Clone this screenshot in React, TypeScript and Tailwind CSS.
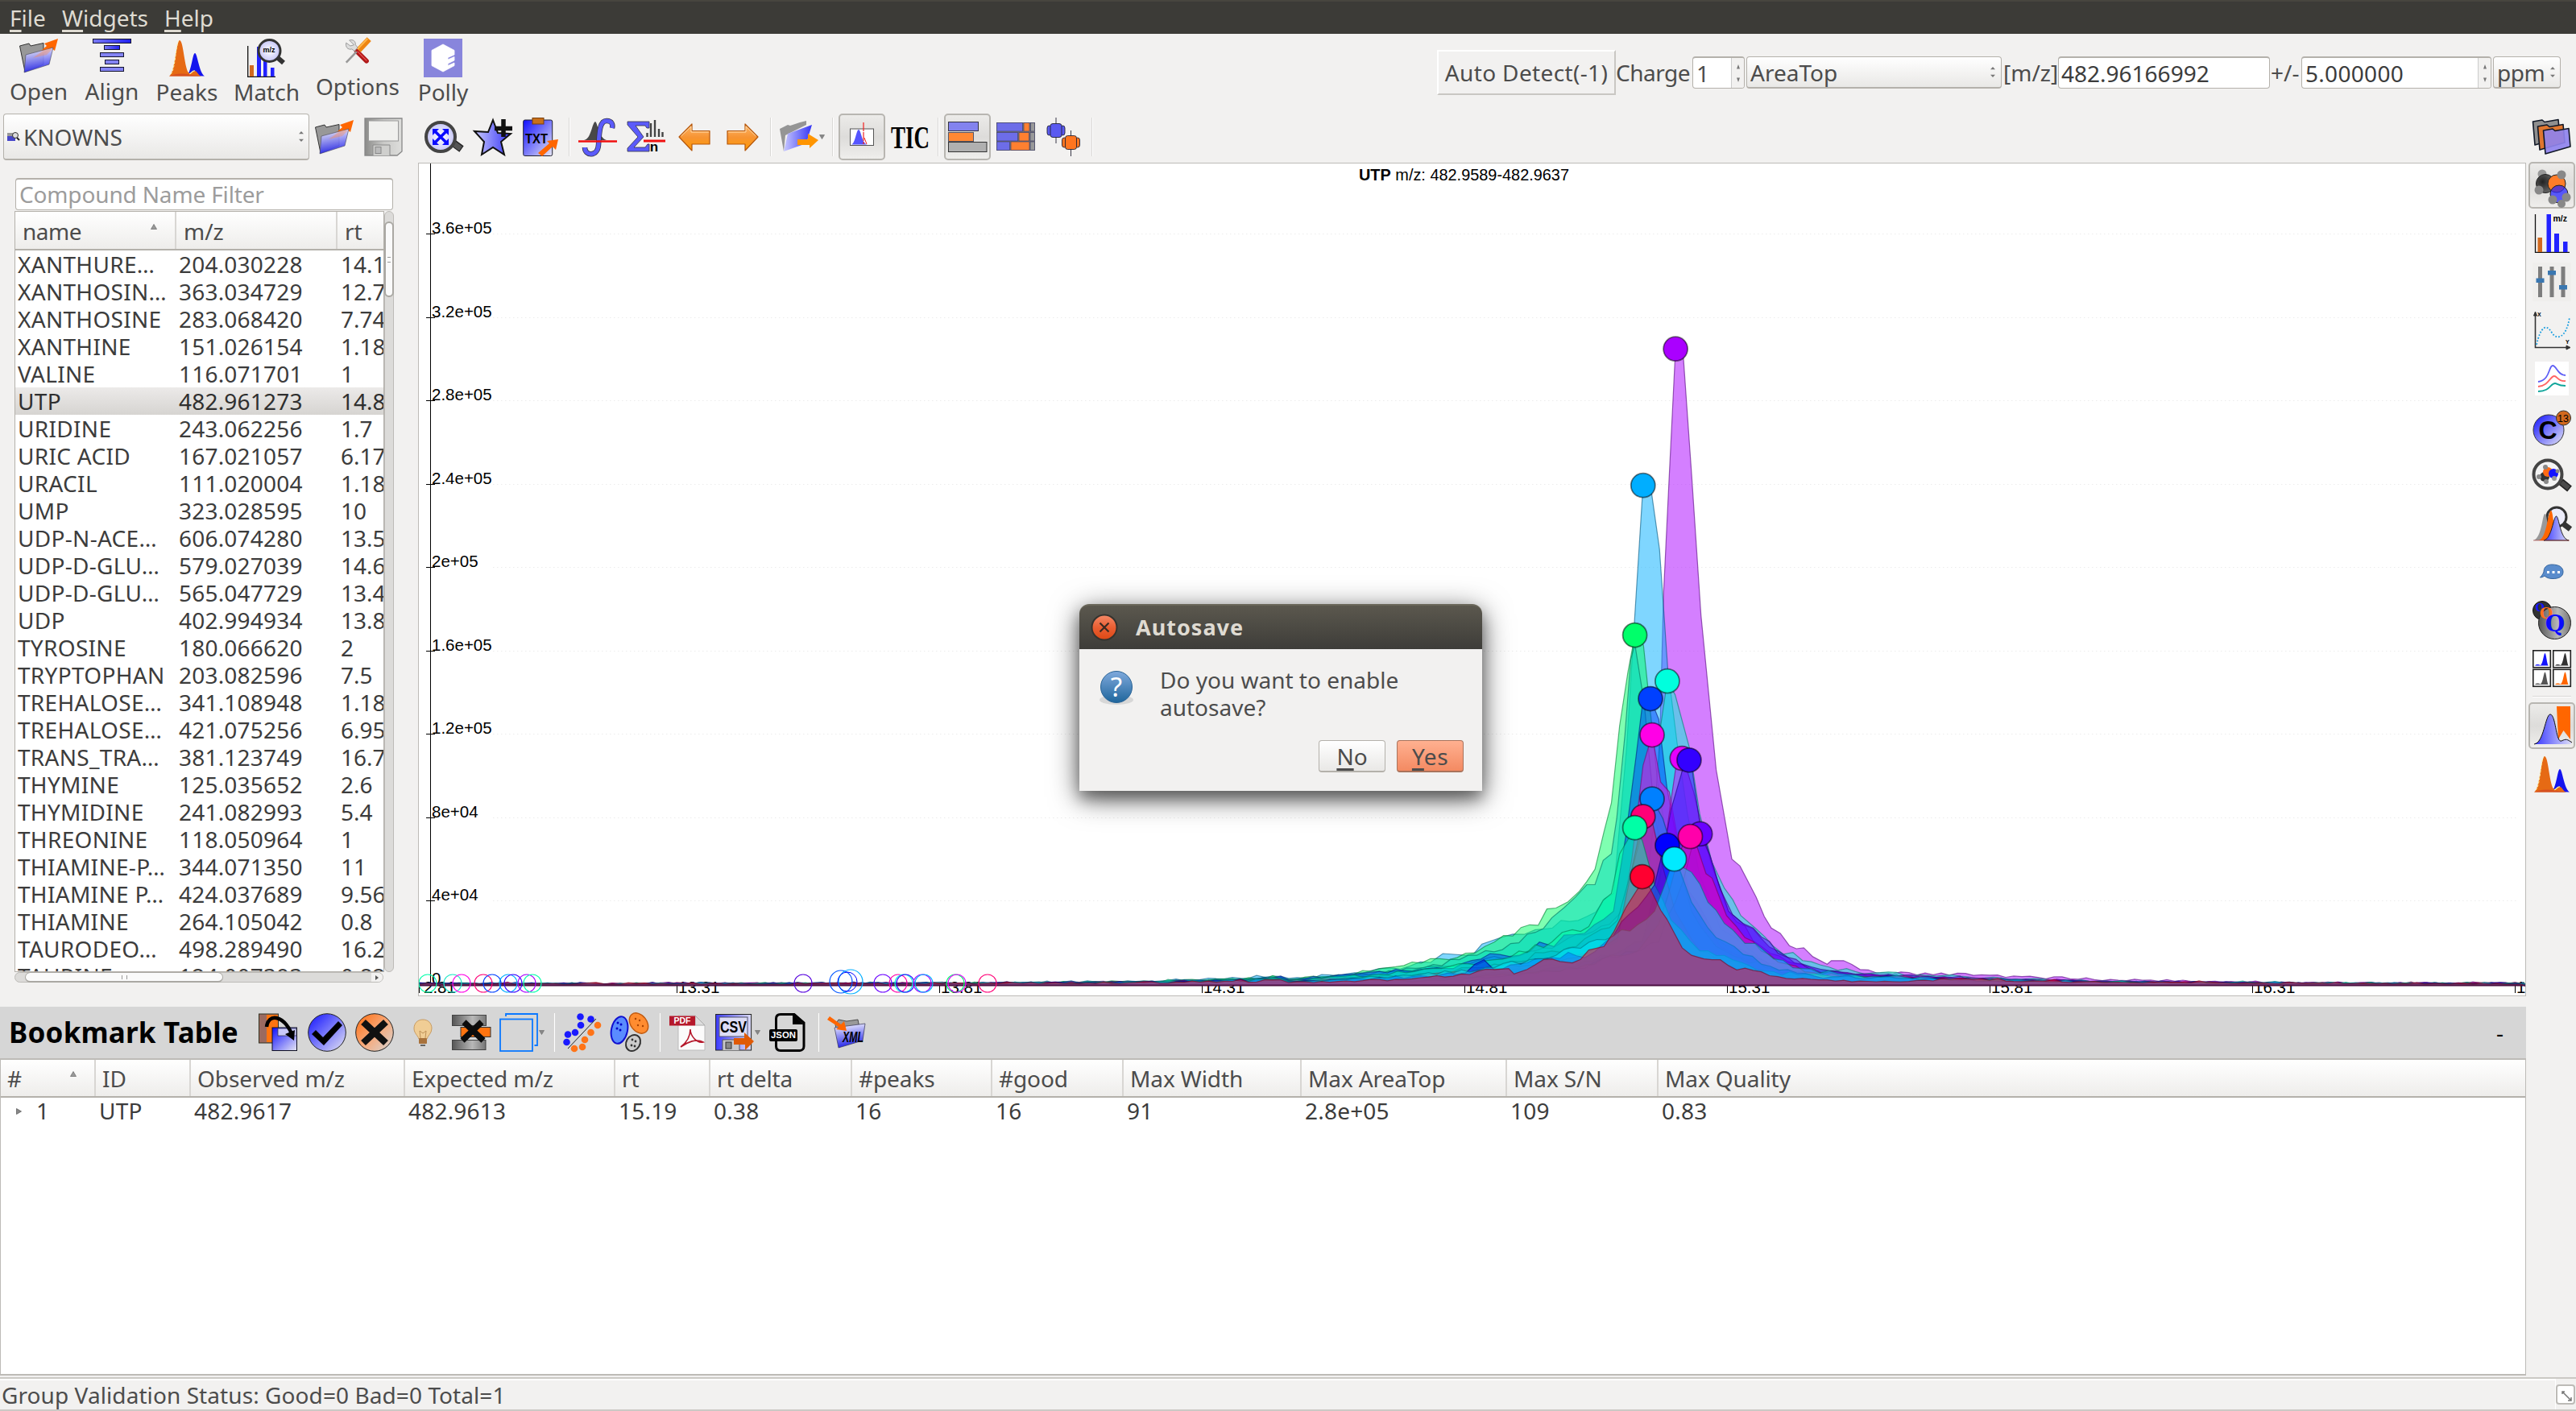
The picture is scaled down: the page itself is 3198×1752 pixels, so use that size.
import React from "react";

type P = { children?: React.ReactNode; className?: string };

/* ---------- shared gradients ---------- */
const Defs = () => (
  <svg className="absolute h-0 w-0" aria-hidden="true">
    <defs>
      <linearGradient id="blueV" x1="0.3" y1="0" x2="0.5" y2="1">
        <stop offset="0" stopColor="#f4f4ff" /><stop offset="1" stopColor="#1a1ae8" />
      </linearGradient>
      <linearGradient id="blueD" x1="0" y1="0" x2="1" y2="1">
        <stop offset="0" stopColor="#0f0fff" /><stop offset="1" stopColor="#e6e6f4" />
      </linearGradient>
      <linearGradient id="blueH" x1="0" y1="0" x2="1" y2="0">
        <stop offset="0" stopColor="#3a3aff" /><stop offset="1" stopColor="#dcdcf8" />
      </linearGradient>
      <linearGradient id="blueR" x1="0" y1="0" x2="1" y2="0">
        <stop offset="0" stopColor="#c8c8ff" /><stop offset="1" stopColor="#3535f5" />
      </linearGradient>
      <linearGradient id="bar" x1="0" y1="0" x2="1" y2="0">
        <stop offset="0" stopColor="#7a7af5" /><stop offset="1" stopColor="#2020f0" />
      </linearGradient>
      <linearGradient id="orD" x1="0" y1="0" x2="1" y2="1">
        <stop offset="0" stopColor="#ff6a0a" /><stop offset="0.5" stopColor="#f8a878" /><stop offset="1" stopColor="#d6d6d6" />
      </linearGradient>
      <linearGradient id="orV" x1="0" y1="0" x2="0" y2="1">
        <stop offset="0" stopColor="#fdb76a" /><stop offset="0.5" stopColor="#f79433" /><stop offset="1" stopColor="#ff9a00" />
      </linearGradient>
      <linearGradient id="grayH" x1="0" y1="0" x2="1" y2="0">
        <stop offset="0" stopColor="#555" /><stop offset="0.6" stopColor="#b8b8b8" /><stop offset="1" stopColor="#777" />
      </linearGradient>
      <linearGradient id="floppy" x1="0" y1="0" x2="1" y2="0">
        <stop offset="0" stopColor="#8a8a88" /><stop offset="0.5" stopColor="#c9c9c7" /><stop offset="1" stopColor="#dededc" />
      </linearGradient>
      <radialGradient id="dark" cx="0.35" cy="0.4" r="0.8">
        <stop offset="0" stopColor="#222" /><stop offset="1" stopColor="#777" />
      </radialGradient>
      <radialGradient id="lens" cx="0.5" cy="0.5" r="0.6">
        <stop offset="0" stopColor="#ffffff" /><stop offset="1" stopColor="#b9b9f5" />
      </radialGradient>
      <linearGradient id="q" x1="0" y1="0" x2="0" y2="1">
        <stop offset="0" stopColor="#7fa9dc" /><stop offset="1" stopColor="#1f669c" />
      </linearGradient>
      <linearGradient id="close" x1="0" y1="0" x2="0" y2="1">
        <stop offset="0" stopColor="#f58a68" /><stop offset="0.5" stopColor="#ea5f33" /><stop offset="1" stopColor="#dd4814" />
      </linearGradient>
    </defs>
  </svg>
);

const Ic = ({ children, className = "h-[48px] w-[48px]" }: P) => (
  <svg viewBox="0 0 48 48" className={`shrink-0 overflow-visible ${className}`}>{children}</svg>
);

/* ---------- icons ---------- */
const FolderOpen = (p: P) => (
  <Ic {...p}>
    <path d="M0.5 9 L12 6 L14 9 L30 5.5 L30 32 L7 41 Z" fill="#989898" stroke="#333" />
    <path d="M16 24 C22 20 27 15 34 9 L31 6 L48 0 L44 15 L40 12 C34 18 26 21 16 24Z" fill="#ff6600" />
    <path d="M8 20 L42 11 L37 32 L6 42 Z" fill="url(#blueV)" fillOpacity="0.92" stroke="#445" strokeWidth="0.6" />
    <path d="M17 24 L34 12 L41 13 L34 20Z" fill="#ff8844" opacity="0.35" />
  </Ic>
);
const AlignIc = () => (
  <Ic>
    {[[0, 0, 48], [14, 8, 20], [9, 17, 30], [15, 26, 18], [9, 35, 30]].map(([x, y, w]) => (
      <rect key={y} x={x + 0.5} y={y + 0.5} width={w - 1} height="5" fill={y > 12 ? "#8484f4" : "url(#bar)"} stroke="#151530" />
    ))}
  </Ic>
);
const PeaksIc = (p: P) => (
  <Ic {...p}>
    <path d="M24 46 C30 40 31 18 34 18 C37 18 39 42 46 46.5Z" fill="#1414ee" />
    <path d="M2 46.5 C9 44 11 2 15 2 C20 2 21 40 27 43 C29 44 31 40 34 40 C37 40 38 46 42 46.5Z" fill="#e66a14" />
    <path d="M4 44 C10 38 10 6 14 3" fill="none" stroke="#ffef9a" strokeDasharray="3 1.5" />
    <path d="M27 44 C30 43 31 39 34 40" fill="none" stroke="#ffef9a" strokeWidth="1.3" />
    <path d="M2 46.5 C14 41 24 44 42 46.5Z" fill="#d65020" />
  </Ic>
);
const MatchIc = () => (
  <Ic>
    <path d="M0.7 9 V47.3 H35" fill="none" stroke="#111" strokeWidth="1.3" />
    <rect x="3" y="33" width="5" height="14" fill="#d2691e" />
    <rect x="12" y="10" width="5" height="37" fill="#2222ff" />
    <rect x="20" y="27" width="4.5" height="20" fill="#2222ff" />
    <rect x="29" y="36" width="4.5" height="11" fill="#2222ff" />
    <path d="M38 24 L45 30" stroke="#333" strokeWidth="6" />
    <circle cx="27.5" cy="15" r="13.5" fill="url(#lens)" stroke="#333" strokeWidth="3" />
    <text x="27" y="17" fontSize="9" fontWeight="bold" textAnchor="middle" fontFamily="Liberation Sans, sans-serif">m/z</text>
  </Ic>
);
const ToolsIc = () => (
  <Ic className="h-[31px] w-[32px]">
    <path d="M22 24 L41 43" stroke="#b01818" strokeWidth="9" strokeLinecap="round" />
    <path d="M24 25 L41 42" stroke="#e55" strokeWidth="2" strokeLinecap="round" />
    <path d="M2 46 L22 25" stroke="#999" strokeWidth="4" />
    <path d="M26 22 L46 1" stroke="#ee8512" strokeWidth="11" />
    <path d="M24 20 L43 0" stroke="#ffb84d" strokeWidth="3" />
    <path d="M8 3 L17 12 L10 14 L2 8 C0 16 5 22 13 20 L18 24 L24 17 L20 12 C20 5 16 1 8 3Z" fill="#ddd" stroke="#999" strokeWidth="1.5" />
  </Ic>
);
const PollyIc = () => (
  <Ic>
    <rect width="48" height="48" fill="#8885dc" />
    <path d="M24 7 L38 14.5 V20 L30 23.5 V26 L38 22.5 V27 L30 31 V33.5 L38 30 V33.5 L24 41 L10 33.5 V14.5Z" fill="#fff" stroke="#fff" strokeWidth="0.8" strokeLinejoin="round" />
  </Ic>
);
const FloppyIc = () => (
  <Ic>
    <path d="M1 1 H47 V42 L41 47 H1Z" fill="url(#floppy)" stroke="#888" strokeWidth="1.3" />
    <rect x="5.5" y="4" width="37" height="25" fill="#f0f0ee" stroke="#999" />
    <path d="M11 47 V34 H32 V47" fill="#cfcfcd" stroke="#8a8a8a" />
    <rect x="14" y="36.5" width="7" height="8" fill="#bbb" stroke="#888" />
  </Ic>
);
const ZoomFitIc = () => (
  <Ic>
    <path d="M35 31 L46 39" stroke="#222" strokeWidth="9" />
    <path d="M36 32 L45 38.5" stroke="#555" strokeWidth="6.5" />
    <circle cx="20" cy="24" r="18" fill="url(#lens)" stroke="#444" strokeWidth="4" />
    <path d="M13 17 L27 31 M27 17 L13 31" stroke="#0a0aff" strokeWidth="3.5" />
    <path d="M10 14 h8 l-8 8Z M30 14 h-8 l8 8Z M10 34 h8 l-8 -8Z M30 34 h-8 l8 -8Z" fill="#0a0aff" />
  </Ic>
);
const StarIc = () => (
  <Ic>
    <path d="M24 3 L30 19 L46 20 L34 30 L38 46 L24 37 L10 46 L13 30 L1 17 L18 18Z" fill="url(#blueR)" stroke="#111" strokeWidth="2" />
    <path d="M37 2 V24 M26 13.5 H48" stroke="#111" strokeWidth="5.5" />
  </Ic>
);
const TxtIc = () => (
  <Ic>
    <rect x="0.7" y="3" width="36" height="44.5" rx="2" fill="url(#blueD)" stroke="#223" />
    <rect x="12" y="0.5" width="14" height="7.5" fill="#c8701a" stroke="#7a3f0a" />
    <text x="17" y="32" textAnchor="middle" fontSize="17" fontWeight="bold" textLength="28" lengthAdjust="spacingAndGlyphs" fontFamily="Liberation Sans, sans-serif">TXT</text>
    <path d="M19 44 L33 32 L30 29 L44 27 L41 40 L37 36 L24 48Z" fill="#ff6600" />
  </Ic>
);
const IntegralIc = () => (
  <Ic>
    <path d="M8 28 C17 27 18 6 22 5 C25 6 26 25 36 28Z" fill="#484848" />
    <path d="M9 37 C9 48 25 49 26 34 C27 20 27 4 36 4 C43 4 44 9 43 13" fill="none" stroke="#334" strokeWidth="6.5" />
    <path d="M9 37 C9 48 25 49 26 34 C27 20 27 4 36 4 C43 4 44 9 43 13" fill="none" stroke="#5b5bfa" strokeWidth="5" />
    <path d="M1 29.5 H49" stroke="#f01010" strokeWidth="2.5" />
  </Ic>
);
const SigmaIc = () => (
  <Ic>
    <path d="M1 5 H28 V13 H25 L23 10 H11 L21 24 L9 37 H23 L26 33 H28 V42 H1 V38 L14 24 L1 9Z" fill="#5b5bfa" stroke="#334" strokeWidth="0.8" />
    <path d="M25.5 24 V19 M30 24 V7 M35 24 V3 M40 24 V14 M44.5 24 V18" stroke="#444" strokeWidth="2.4" />
    <path d="M21 29 H48" stroke="#f01010" strokeWidth="3" />
    <text x="34" y="42" fontSize="17" fontWeight="bold" textAnchor="middle" fontFamily="Liberation Sans, sans-serif">n</text>
  </Ic>
);
const ArrowIc = ({ flip }: { flip?: boolean }) => (
  <Ic>
    <g transform={flip ? "matrix(-1 0 0 1 48 0)" : undefined}>
      <path d="M5 24 L21 8 V16.5 H43 V33 H21 V41Z" fill="url(#orV)" stroke="#b5560a" strokeWidth="1.2" strokeLinejoin="round" />
      <path d="M7.5 23 L20 11 V18 H42" fill="none" stroke="#ffd9a8" />
    </g>
  </Ic>
);
const FolderGo = () => (
  <Ic>
    <path d="M1 14 L11 9 L14 10 L26 6 L34 4 L34 9 L8 22 L6 42Z" fill="#959595" />
    <path d="M11 20 L41 9 L34 32 L6 42Z" fill="url(#blueR)" />
    <path d="M23 27 H36 V20 L49 28 L38 38 V34 H23Z" fill="#ff9500" />
  </Ic>
);
const EicIc = () => (
  <Ic>
    <rect x="9.5" y="14" width="29" height="20.5" fill="#fff" stroke="#555" />
    <path d="M11 33.5 C16 32 17 15 20 15 C23 15 24 33 31 33.5Z" fill="#5555ff" />
    <path d="M26 6 V33" stroke="#f02020" strokeDasharray="11 1" strokeWidth="1.2" />
    <path d="M27 25 L30 33" stroke="#f02020" />
  </Ic>
);
const TicIc = () => (
  <Ic>
    <text x="0" y="38" fontSize="41" fontWeight="bold" textLength="48" lengthAdjust="spacingAndGlyphs" fontFamily="Liberation Serif, serif">TIC</text>
  </Ic>
);
const BarsIc = () => (
  <Ic>
    <rect x="0.5" y="5.5" width="37" height="11" fill="#8383ee" stroke="#334" />
    <rect x="0.5" y="18.5" width="31" height="11" fill="#ff8833" stroke="#556" />
    <rect x="0.5" y="30.5" width="47.5" height="12" fill="#b0b0b0" stroke="#333" />
  </Ic>
);
const StackIc = () => (
  <Ic>
    <rect x="0" y="6" width="48" height="35" fill="#777" />
    {[[0.5, 6.5, 32, "#6d6de8"], [34, 6.5, 7, "#ff8030"], [42.5, 6.5, 5, "#999"], [0.5, 18.5, 26, "#6d6de8"], [28, 18.5, 12.5, "#ff8030"], [42, 18.5, 5.5, "#999"], [0.5, 30, 16, "#6d6de8"], [18, 30, 23, "#ff8030"], [42, 30, 5.5, "#999"]].map(([x, y, w, c], i) => (
      <rect key={i} x={x} y={y} width={w} height="10.5" fill={c as string} stroke="#44446a" strokeWidth="0.7" />
    ))}
  </Ic>
);
const MirrorIc = () => (
  <Ic>
    {[[12, 16, 0, 32, "#5a5af0"], [30.5, 31, 16, 48, "#ff7520"]].map(([x, y, a, b, c], i) => (
      <g key={i} stroke="#223" strokeWidth="0.9">
        <path d={`M${x} ${a} V${b}`} />
        <rect x={+x - 11} y={+y - 6} width="5.5" height="12" rx="3" fill={c as string} />
        <rect x={+x + 5.5} y={+y - 6} width="5.5" height="12" rx="3" fill={c as string} />
        <rect x={+x - 7} y={+y - 8.5} width="14" height="17" rx="3" fill={c as string} />
      </g>
    ))}
  </Ic>
);

/* sidebar */
const FoldersIc = () => (
  <Ic>
    {[[0, 2, "#8f8f8f", 1], [6, 8, "#e0762f", 1], [13, 13, "#8f83ee", 0.92]].map(([x, y, c, o], i) => (
      <path key={i} transform={`translate(${x} ${y})`} d="M0.5 3 L12 1 L15 3.5 L32 0.5 L34 23 L3 32Z" fill={c as string} fillOpacity={o as number} stroke="#111827" strokeWidth="1.6" strokeLinejoin="round" />
    ))}
  </Ic>
);
const MoleculeIc = () => (
  <Ic>
    <circle cx="12" cy="10" r="5.5" fill="#999" /><circle cx="16" cy="22" r="11.5" fill="url(#dark)" stroke="#222" />
    <circle cx="30" cy="22" r="11" fill="#ff7d2a" stroke="#222" />
    <circle cx="33" cy="35" r="11" fill="#2828ff" fillOpacity="0.75" stroke="#222" />
    <circle cx="36" cy="11" r="5.5" fill="#888" /><circle cx="8" cy="30" r="5.5" fill="#888" />
    <circle cx="25" cy="42" r="5.5" fill="#888" /><circle cx="42" cy="39" r="5.5" fill="#888" /><circle cx="36" cy="47" r="5" fill="#888" />
  </Ic>
);
const MzIc = () => (
  <Ic>
    <path d="M3.5 0 V47.3 H46" fill="none" stroke="#111" strokeWidth="1.3" />
    <rect x="6.5" y="29" width="5.5" height="18" fill="#d2691e" /><rect x="17.5" y="0" width="5.5" height="47" fill="#2222ff" />
    <rect x="27" y="24" width="6" height="23" fill="#2222ff" /><rect x="38" y="34" width="5.5" height="13" fill="#2222ff" />
    <text x="25.5" y="8.5" fontSize="10.5" fontWeight="bold" fontFamily="Liberation Sans, sans-serif">m/z</text>
  </Ic>
);
const SlidersIc = () => (
  <Ic>
    <rect width="48" height="48" fill="#efeeec" />
    {[[9.5, 22.5], [24, 13], [38, 31]].map(([x, y]) => (
      <g key={x}><rect x={x - 2.5} y="5" width="5" height="38" fill="#7d7d7d" /><rect x={x - 5} y={y - 3} width="10" height="5.5" fill="#3a77b0" /></g>
    ))}
  </Ic>
);
const XyIc = () => (
  <Ic>
    <path d="M3.5 3 V45.5 H44" fill="none" stroke="#333" strokeWidth="1.6" />
    <path d="M1.5 6 L3.5 1 L5.5 6Z M42 43 L47 45.5 L42 48Z" fill="#333" stroke="#333" />
    <path d="M5 42 C10 20 17 15 24 27 C30 37 42 34 46 8" fill="none" stroke="#1a9ee0" strokeWidth="1.8" strokeDasharray="1.8 2" />
    <text x="6" y="7" fontSize="7" fontWeight="bold" fontFamily="Liberation Sans, sans-serif">X</text>
    <text x="41" y="41" fontSize="7" fontWeight="bold" fontFamily="Liberation Sans, sans-serif">Y</text>
  </Ic>
);
const CurvesIc = () => (
  <Ic>
    <rect x="3" y="3" width="42" height="42" fill="#fff" />
    <g fill="none" strokeWidth="1.8">
      <path d="M7 28 C22 26 20 8 25 8 C30 8 31 20 41 20" stroke="#5f5ff5" />
      <path d="M7 34 C20 33 22 21 27 21 C31 21 31 28 41 27" stroke="#ff6464" />
      <path d="M7 40 C22 40 22 30 28 30 C31 30 31 33 41 33" stroke="#10a59a" />
    </g>
  </Ic>
);
const C13Ic = () => (
  <Ic>
    <ellipse cx="20" cy="28" rx="19" ry="19" fill="url(#blueD)" stroke="#333" />
    <text x="19" y="39" fontSize="32" fontWeight="bold" textAnchor="middle" fontFamily="Liberation Sans, sans-serif">C</text>
    <circle cx="38.5" cy="13" r="9" fill="#d2691e" stroke="#333" />
    <text x="38" y="17.5" fontSize="12.5" textAnchor="middle" fontFamily="Liberation Sans, sans-serif">13</text>
  </Ic>
);
const MolSearchIc = () => (
  <Ic>
    <path d="M35 32 L46 41" stroke="#222" strokeWidth="9" /><path d="M36 33 L45 40" stroke="#4a4a4a" strokeWidth="6" />
    <circle cx="19" cy="23" r="17.5" fill="#f4f4f4" stroke="#444" strokeWidth="4" />
    <circle cx="15" cy="26" r="6" fill="#333" /><circle cx="19" cy="20" r="6" fill="#ff6a14" /><circle cx="26" cy="22" r="6" fill="#1414ff" />
    <circle cx="16" cy="14" r="3" fill="#888" /><circle cx="8" cy="26" r="3" fill="#888" /><circle cx="17" cy="32" r="3" fill="#888" /><circle cx="27" cy="28" r="3" fill="#999" /><circle cx="31" cy="19" r="2.5" fill="#888" />
  </Ic>
);
const PeakSearchIc = () => (
  <Ic>
    <path d="M39 25 L47 31" stroke="#333" strokeWidth="7" />
    <circle cx="30" cy="16" r="12" fill="#ececfa" stroke="#333" strokeWidth="3" />
    <path d="M1 45 C12 42 12 12 15.5 12 C19 12 19 45 24 45Z" fill="#999" />
    <path d="M8 45 C18 42 19 8 23 8 C26 8 27 45 32 45Z" fill="#ff6600" />
    <path d="M14 45 C24 43 26 15 29.5 15 C33 15 34 43 45 45Z" fill="url(#blueH)" stroke="#222" />
    <path d="M1 45 H46" stroke="#a33" strokeWidth="0.6" />
  </Ic>
);
const ChatIc = () => (
  <Ic>
    <path d="M24 15 C34 15 38 19 38 24 C38 30 33 32.5 25 32.5 C20 32.5 17 31 15 29 C13 30.5 11 31 9.5 31 C11 29.5 13 27 14 24 C14 19 17 15 24 15Z" fill="#5a8ccc" stroke="#35659e" />
    <path d="M18 24.5 h3 M24.5 24.5 h3 M31 24.5 h3" stroke="#fff" strokeWidth="3" />
  </Ic>
);
const QIc = () => (
  <Ic>
    <circle cx="12" cy="12" r="11.5" fill="#333" stroke="#111" />
    <circle cx="27.5" cy="27.5" r="20" fill="url(#grayH)" stroke="#222" />
    <g fontFamily="DejaVu Serif, serif" fontWeight="bold" textAnchor="middle">
      <text x="9.5" y="12.5" fontSize="13" fill="#1414ff">Q</text><text x="17" y="22" fontSize="19" fill="#ff7020">Q</text><text x="28" y="38" fontSize="28" fill="#0a0aff">Q</text>
    </g>
  </Ic>
);
const FourIc = () => (
  <Ic>
    {[[0, 1, "#1414ff"], [25, 1, "#333"], [0, 24.5, "#555"], [25, 24.5, "#ff6600"]].map(([x, y, c], i) => (
      <g key={i} transform={`translate(${x} ${y})`}>
        <rect x="0.8" y="0.8" width="21.5" height="21" fill="#fff" stroke="#222" strokeWidth="1.6" />
        <path d="M3 19.5 C5 17 8 18 10 19 C13 17 14 4 15.5 4 C17 4 18 19 20 19.5Z" fill={c as string} />
      </g>
    ))}
  </Ic>
);
const BookmarkPeakIc = () => (
  <Ic>
    <path d="M30 0 H47 V41 L38.5 30 L32 41Z" fill="#ff6600" />
    <path d="M3 46 C14 46 16 10 22 10 C29 10 29 44 36 43 C39 42 40 41 43 41 C45 41 46 43 48 44 V47 H3Z" fill="url(#blueH)" />
    <path d="M2 47 C14 46 16 10 22 10 C29 10 29 46 36 43 C42 40 43 41 49 45" fill="none" stroke="#111" />
  </Ic>
);

/* bookmark toolbar */
const MoveIc = () => (
  <Ic>
    <rect x="0.5" y="1" width="24" height="36" fill="#9b6a60" stroke="#332" /><rect x="10" y="2" width="14" height="34" fill="#ff7410" />
    <rect x="17" y="18" width="30.5" height="28.5" fill="url(#blueD)" stroke="#112" /><rect x="24" y="19" width="23" height="9" fill="#c9c9fa" stroke="#334" strokeWidth="0.7" />
    <path d="M10 17 C12 0 30 2 41 25" fill="none" stroke="#000" strokeWidth="4.5" /><path d="M33 26 L45 21 L44 34Z" />
  </Ic>
);
const CheckIc = () => (
  <Ic><circle cx="24" cy="24" r="23.3" fill="url(#blueD)" stroke="#222" /><path d="M5 26 L10 21 L19 30 L38 10 L43 15 L20 40Z" /></Ic>
);
const CrossIc = () => (
  <Ic><circle cx="24" cy="24" r="23.3" fill="url(#orD)" stroke="#222" /><path d="M10 11 L38 37 M38 11 L10 37" stroke="#111" strokeWidth="8.5" /></Ic>
);
const BulbIc = () => (
  <Ic>
    <path d="M24 8 C31 8 35 13 35 19 C35 25 30 28 29 32 H19 C18 28 13 25 13 19 C13 13 17 8 24 8Z" fill="#f0cd95" stroke="#c89c62" />
    <path d="M21 31 L20 22 L24 25 L28 22 L27 31" fill="none" stroke="#b88a50" strokeWidth="0.9" />
    <rect x="19" y="31" width="10" height="7" rx="1" fill="#a8723c" /><path d="M21 40 h6" stroke="#666" strokeWidth="2" />
  </Ic>
);
const RemoveIc = () => (
  <Ic>
    <rect x="0.5" y="2.5" width="42" height="13" fill="url(#grayH)" stroke="#444" /><rect x="11" y="17.5" width="37" height="12" fill="#ff7410" stroke="#333" />
    <rect x="0.5" y="33.5" width="41.5" height="12" fill="url(#grayH)" stroke="#444" />
    <path d="M15 11 L39 34 M37 11 L13 34" stroke="#0c0c0c" strokeWidth="7.5" />
  </Ic>
);
const CopyIc = () => (
  <Ic><g fill="none" stroke="#0a78ff" strokeWidth="1.8"><path d="M8 4 V1 H47 V40 H43.5" /><rect x="1" y="7.5" width="40" height="39.5" /></g></Ic>
);
const ScatterIc = () => (
  <Ic>
    {[[21.5, 4.5, 0], [34.5, 7.5, 0], [22, 15, 0], [15, 24, 0], [6, 26.5, 0], [4.5, 36, 0], [43, 15, 1], [34.5, 24, 1], [27, 33, 1], [24, 42, 1], [14, 44, 1]].map(([x, y, o], i) => (
      <circle key={i} cx={x} cy={y} r="4.3" fill={o ? "#ff7418" : "#1a1aff"} />
    ))}
    <path d="M6 44 L41 7" stroke="#222" />
  </Ic>
);
const CellsIc = () => (
  <Ic>
    <ellipse cx="11" cy="21" rx="10" ry="17" transform="rotate(12 11 21)" fill="#5a8cff" stroke="#1010d0" strokeWidth="2" />
    <ellipse cx="35" cy="12.5" rx="10" ry="14" transform="rotate(-38 35 12.5)" fill="#ff8c30" stroke="#c05a10" strokeWidth="1.5" />
    <ellipse cx="28" cy="37" rx="8.5" ry="10.5" transform="rotate(30 28 37)" fill="#ccc" stroke="#333" strokeWidth="2" />
    {[[9, 12], [13, 14], [8, 19], [12, 21]].map(([x, y], i) => <circle key={i} cx={x} cy={y} r="1.5" fill="#0000c8" />)}
    {[[31, 7], [36, 9], [34, 15], [40, 16]].map(([x, y], i) => <circle key={i} cx={x} cy={y} r="1.2" fill="#a84400" />)}
    {[[27, 33], [31, 35], [26, 40], [30, 41]].map(([x, y], i) => <circle key={i} cx={x} cy={y} r="1.4" fill="#333" />)}
  </Ic>
);
const PdfIc = () => (
  <Ic>
    <path d="M11 3 H32 L44 15 V46 H11Z" fill="#fbfbfb" stroke="#bbb" /><path d="M32 3 V15 H44Z" fill="#ddd" stroke="#aaa" />
    <rect x="0" y="3.5" width="32" height="12" fill="#b5182b" /><text x="16" y="13" textAnchor="middle" fontSize="10.5" fontWeight="bold" fill="#fff" fontFamily="Liberation Sans, sans-serif">PDF</text>
    <path d="M14 42 C22 36 26 28 26 20 C26 28 34 38 42 36 C34 31 22 36 14 42Z" fill="none" stroke="#b5182b" strokeWidth="1.6" />
  </Ic>
);
const CsvIc = () => (
  <Ic>
    <rect x="0.6" y="1.5" width="44" height="44.5" fill="url(#blueH)" stroke="#222" />
    <rect x="5" y="5" width="35" height="24" fill="#dcdcf6" stroke="#556" />
    <text x="22.5" y="24" textAnchor="middle" fontSize="20" fontWeight="bold" textLength="33" lengthAdjust="spacingAndGlyphs" fontFamily="Liberation Sans, sans-serif">CSV</text>
    <path d="M9 46 V33 H30 V46" fill="#c8c8cc" stroke="#555" /><rect x="13" y="36" width="7" height="8" fill="#888" stroke="#333" />
    <path d="M23 31 H36 V24 L48 35 L37 46 V39 H23Z" fill="#e05a06" />
  </Ic>
);
const JsonIc = () => (
  <Ic>
    <path d="M14 1.5 H31 L43 12 V41 C43 44 41 46.5 38 46.5 H14 C10 46.5 8.5 44 8.5 41 V7 C8.5 3 10.5 1.5 14 1.5Z" fill="none" stroke="#000" strokeWidth="3" /><path d="M29 1 L43 14 H29Z" />
    <rect x="0" y="20" width="35" height="15" rx="2" />
    <text x="17.5" y="31" textAnchor="middle" fontSize="10.5" fontWeight="bold" fill="#fff" textLength="31" lengthAdjust="spacingAndGlyphs" fontFamily="Liberation Sans, sans-serif">JSON</text>
  </Ic>
);
const XmlIc = () => (
  <Ic>
    <path d="M10 14 L14 8 L24 10 L38 8 L40 18 L14 34Z" fill="#999" stroke="#333" strokeWidth="0.8" />
    <path d="M9 18 L47 13 L44 34 L14 43Z" fill="url(#blueV)" stroke="#335" strokeWidth="0.7" />
    <path d="M0 8 L3 4 L17 14 L21 10 L24 22 L11 20 L14 17Z" fill="#ff6600" />
    <text x="19" y="36" fontSize="18" fontWeight="bold" fontStyle="italic" textLength="26" lengthAdjust="spacingAndGlyphs" fontFamily="Liberation Sans, sans-serif">XML</text>
  </Ic>
);

/* ---------- widgets ---------- */
const T = ({ children, className = "" }: P) => <span className={`block shrink-0 whitespace-nowrap leading-[34px] ${className}`}>{children}</span>;
const U = ({ children }: P) => <span className="underline decoration-[3px] underline-offset-[4px] [text-decoration-skip-ink:none]">{children}</span>;
const Sep = ({ className = "" }: P) => <div className={`h-[48px] w-[2px] shrink-0 border-r border-white bg-[#d9d8d6] ${className}`} />;
const Spin = ({ className = "" }: P) => (
  <svg viewBox="0 0 6 14" className={`shrink-0 ${className}`} preserveAspectRatio="none"><path d="M0 3.5 L3 0 L6 3.5Z M0 10.5 L3 14 L6 10.5Z" fill="#777" /></svg>
);
const Drop = ({ className = "" }: P) => (
  <svg viewBox="0 0 7 6" className={`h-[6px] w-[7px] shrink-0 ${className}`}><path d="M0.5 0.5 H6.5 L3.5 5.5Z" fill="#888" stroke="#666" strokeWidth="0.6" /></svg>
);
const field = "flex shrink-0 items-center overflow-hidden rounded-[4px] border border-t-2 border-[#b4b1ab] bg-white";
const combo = "flex shrink-0 items-center rounded-[4px] border border-b-2 border-[#b4b1ab] bg-gradient-to-b from-white to-[#e9e8e6]";
const pressed = "flex h-[58px] w-[58px] shrink-0 items-center justify-center rounded-[5px] border-2 border-[#b8b6b1] bg-gradient-to-b from-[#ecebe9] via-[#dddcda] to-[#efeeec]";

const Tool = ({ w, gap, icon, label }: { w: string; gap: string; icon: React.ReactNode; label: React.ReactNode }) => (
  <div className={`flex shrink-0 flex-col items-center pt-[6px] ${w}`}>{icon}<T className={gap}>{label}</T></div>
);

/* ---------- compounds ---------- */
const compounds = `XANTHURE…|204.030228|14.1
XANTHOSIN…|363.034729|12.7
XANTHOSINE|283.068420|7.74
XANTHINE|151.026154|1.18
VALINE|116.071701|1
UTP|482.961273|14.8
URIDINE|243.062256|1.7
URIC ACID|167.021057|6.17
URACIL|111.020004|1.18
UMP|323.028595|10
UDP-N-ACE…|606.074280|13.5
UDP-D-GLU…|579.027039|14.6
UDP-D-GLU…|565.047729|13.4
UDP|402.994934|13.8
TYROSINE|180.066620|2
TRYPTOPHAN|203.082596|7.5
TREHALOSE…|341.108948|1.18
TREHALOSE…|421.075256|6.95
TRANS_TRA…|381.123749|16.7
THYMINE|125.035652|2.6
THYMIDINE|241.082993|5.4
THREONINE|118.050964|1
THIAMINE-P…|344.071350|11
THIAMINE P…|424.037689|9.56
THIAMINE|264.105042|0.8
TAURODEO…|498.289490|16.2
TAURINE|124.007393|0.82`.split("\n").map((r) => r.split("|"));

/* ---------- chromatogram ---------- */
type Series = { c: [number, number, number]; pts: number[] };
const series: Series[] = [
  { c: [170, 0, 255], pts: [0, 1529, 200, 1515, 400, 1500, 600, 1465, 750, 1440, 882, 1408, 897, 1240, 905, 900, 912, 650, 925, 400, 941, 97, 960, 115, 980, 380, 1003, 700, 1040, 1050, 1078, 1252, 1098, 1268, 1137, 1338, 1157, 1382, 1174, 1408, 1218, 1448, 1235, 1455, 1253, 1453, 1275, 1473, 1310, 1490, 1320, 1482, 1350, 1482, 1390, 1502, 1450, 1510, 1568, 1514] },
  { c: [0, 174, 255], pts: [0, 1522, 140, 1512, 220, 1500, 270, 1501, 345, 1486, 375, 1466, 430, 1470, 490, 1438, 545, 1422, 600, 1412, 725, 1382, 790, 1330, 822, 1000, 842, 700, 862, 406, 883, 425, 902, 550, 922, 820, 945, 990, 970, 1150, 1000, 1290, 1050, 1410, 1150, 1480, 1400, 1520] },
  { c: [0, 255, 100], pts: [0, 1524, 120, 1514, 200, 1506, 300, 1485, 390, 1480, 430, 1465, 500, 1440, 545, 1426, 565, 1407, 607, 1402, 628, 1365, 650, 1363, 707, 1325, 725, 1303, 745, 1275, 767, 1190, 785, 1125, 805, 950, 825, 830, 842, 745, 863, 768, 880, 920, 900, 1100, 930, 1250, 980, 1390, 1100, 1480, 1300, 1520] },
  { c: [0, 220, 190], pts: [0, 1527, 200, 1514, 330, 1498, 500, 1462, 600, 1418, 640, 1385, 670, 1362, 725, 1310, 745, 1310, 765, 1255, 785, 1240, 798, 1160, 818, 970, 832, 800, 842, 765, 865, 900, 890, 1150, 930, 1330, 1000, 1450, 1200, 1520] },
  { c: [0, 255, 214], pts: [0, 1526, 200, 1512, 400, 1495, 600, 1460, 780, 1400, 870, 1320, 890, 1150, 905, 950, 921, 849, 940, 880, 975, 1000, 1000, 1150, 1030, 1260, 1060, 1318, 1100, 1380, 1137, 1410, 1180, 1450, 1250, 1482, 1400, 1512] },
  { c: [0, 64, 255], pts: [0, 1526, 180, 1510, 320, 1502, 400, 1500, 490, 1466, 560, 1470, 610, 1440, 645, 1450, 670, 1424, 720, 1420, 790, 1370, 820, 1200, 845, 1020, 862, 889, 880, 889, 900, 935, 920, 1090, 940, 1190, 970, 1320, 1040, 1430, 1200, 1510] },
  { c: [255, 0, 230], pts: [200, 1525, 500, 1500, 700, 1470, 800, 1440, 835, 1250, 862, 1040, 884, 971, 905, 1078, 926, 1100, 945, 1200, 980, 1350, 1050, 1450, 1200, 1510] },
  { c: [230, 0, 255], pts: [300, 1525, 700, 1490, 860, 1440, 900, 1320, 930, 1120, 945, 1024, 960, 1024, 985, 1100, 1005, 1180, 1030, 1270, 1070, 1370, 1150, 1450, 1300, 1512] },
  { c: [51, 0, 255], pts: [300, 1527, 700, 1495, 860, 1440, 900, 1300, 930, 1140, 965, 1028, 980, 1040, 1000, 1170, 1020, 1230, 1070, 1370, 1130, 1410, 1190, 1460, 1250, 1490, 1400, 1520] },
  { c: [0, 128, 255], pts: [0, 1528, 300, 1515, 500, 1490, 700, 1450, 800, 1390, 840, 1260, 862, 1180, 884, 1116, 910, 1160, 940, 1250, 980, 1370, 1040, 1450, 1200, 1510] },
  { c: [255, 0, 119], pts: [0, 1530, 300, 1520, 500, 1500, 700, 1475, 800, 1430, 838, 1260, 862, 1156, 885, 1170, 910, 1270, 940, 1370, 1000, 1460, 1200, 1520] },
  { c: [106, 0, 255], pts: [400, 1525, 700, 1500, 900, 1440, 960, 1300, 985, 1210, 1001, 1195, 1025, 1245, 1050, 1320, 1080, 1378, 1130, 1408, 1190, 1465, 1300, 1512] },
  { c: [255, 0, 170], pts: [300, 1530, 700, 1500, 850, 1460, 900, 1400, 945, 1260, 965, 1201, 990, 1215, 1015, 1285, 1030, 1295, 1065, 1380, 1110, 1430, 1190, 1485, 1300, 1518] },
  { c: [0, 255, 166], pts: [0, 1528, 200, 1515, 350, 1500, 500, 1480, 640, 1440, 690, 1412, 730, 1405, 765, 1345, 785, 1330, 805, 1240, 842, 1181, 860, 1210, 890, 1310, 930, 1390, 1000, 1460, 1200, 1515] },
  { c: [0, 0, 255], pts: [0, 1530, 300, 1518, 430, 1510, 475, 1480, 500, 1503, 560, 1490, 640, 1475, 680, 1463, 720, 1475, 770, 1440, 850, 1360, 890, 1310, 907, 1245, 921, 1221, 945, 1260, 980, 1350, 1040, 1430, 1150, 1490, 1300, 1522] },
  { c: [0, 234, 255], pts: [0, 1530, 300, 1516, 500, 1498, 650, 1470, 770, 1435, 850, 1400, 890, 1370, 915, 1310, 932, 1265, 957, 1270, 980, 1282, 1020, 1350, 1060, 1398, 1080, 1412, 1110, 1443, 1135, 1443, 1180, 1478, 1250, 1500, 1400, 1520] },
  { c: [255, 0, 48], pts: [0, 1532, 140, 1528, 300, 1523, 420, 1512, 500, 1502, 535, 1500, 548, 1512, 580, 1502, 640, 1478, 660, 1484, 690, 1487, 730, 1458, 767, 1450, 790, 1418, 820, 1362, 850, 1318, 860, 1292, 880, 1320, 905, 1368, 920, 1388, 957, 1453, 980, 1470, 1010, 1478, 1050, 1480, 1090, 1503, 1130, 1504, 1170, 1516, 1250, 1522, 1370, 1530, 1568, 1528] },
];
const dots: [number, number, string][] = [
  [941, 97, "#aa00ff"], [862, 406, "#00aeff"], [842, 745, "#00ff6a"], [921, 849, "#00ffdd"], [880, 889, "#0040ff"], [884, 971, "#ff00e6"],
  [957, 1024, "#e600ff"], [974, 1028, "#3300ff"], [884, 1116, "#0080ff"], [862, 1156, "#ff0077"], [1001, 1195, "#6a00ff"], [977, 1201, "#ff00aa"],
  [842, 1181, "#00ffa6"], [921, 1221, "#0000ff"], [938, 1252, "#00eaff"], [860, 1292, "#ff0030"],
];
const BASE = 1223;
const toX = (x: number) => 1600 + x / 1.96;
const toY = (y: number) => 380 + y / 1.8233;

function trace(s: Series, seed: number) {
  let r = seed * 7919 + 13;
  const rnd = () => ((r = (r * 16807) % 2147483647) / 2147483647);
  const out: string[] = [];
  const add = (x: number, h: number) => out.push(`${x.toFixed(1)} ${(BASE - Math.max(0, h)).toFixed(1)}`);
  const n = s.pts.length;
  const x0 = toX(s.pts[0]), h0 = BASE - toY(s.pts[1]);
  const x1 = toX(s.pts[n - 2]), h1 = BASE - toY(s.pts[n - 1]);
  for (let x = 520; x < x0 - 8; x += 10) add(x, (h0 + rnd() * 4) * Math.exp((x - x0) / 170) + 0.6 + rnd() * rnd() * 3);
  for (let i = 0; i < n; i += 2) {
    const ax = toX(s.pts[i]), ah = BASE - toY(s.pts[i + 1]);
    add(ax, ah);
    if (i + 2 < n) {
      const bx = toX(s.pts[i + 2]), bh = BASE - toY(s.pts[i + 3]);
      const k = Math.floor((bx - ax) / 10);
      for (let j = 1; j < k; j++) {
        const h = ah + ((bh - ah) * j) / k;
        add(ax + ((bx - ax) * j) / k, h + (rnd() - 0.5) * Math.min(9, 1.5 + h * 0.22));
      }
    }
  }
  for (let x = x1 + 10; x < 3135; x += 10) add(x, (h1 + rnd() * 4) * Math.exp((x1 - x) / 210) + 0.6 + rnd() * rnd() * 3);
  return `M520 ${BASE + 1} L${out.join(" L")} L3135 ${BASE + 1}`;
}

const ring: [number, string][] = [
  [531, "#00ffaa"], [562, "#22e6c8"], [573, "#ff00e6"], [600, "#ff0077"], [611, "#0040ff"], [631, "#00aeff"], [637, "#3300ff"], [654, "#aa00ff"], [661, "#00ffaa"],
  [997, "#5500dd"], [1096, "#6a00ff"], [1115, "#ff00aa"], [1122, "#00ffdd"], [1124, "#3300ff"], [1145, "#aa00ff"], [1147, "#00aeff"], [1186, "#00ff6a"], [1188, "#e600ff"], [1226, "#ff0077"],
];

const Chart = () => (
  <svg viewBox="520 203 2615 1033" className="h-[1033px] w-[2615px]" fontFamily="Liberation Sans, sans-serif">
    <text x="1687" y="224" fontSize="19.5" textLength="261" lengthAdjust="spacingAndGlyphs"><tspan fontWeight="bold">UTP</tspan> m/z: 482.9589-482.9637</text>
    {["3.6e+05", "3.2e+05", "2.8e+05", "2.4e+05", "2e+05", "1.6e+05", "1.2e+05", "8e+04", "4e+04"].map((l, i) => {
      const y = Math.round(290 + i * 103.55) + 0.5;
      return (
        <g key={l}>
          <path d={`M612 ${y} H3124`} stroke="#ececec" strokeDasharray="1.5 3.5" />
          <path d={`M529 ${y} H540`} stroke="#000" />
          <text x="536" y={y - 1} fontSize="20.5">{l}</text>
        </g>
      );
    })}
    <text x="536" y="1222" fontSize="20.5">0</text>
    <path d="M534.5 203 V1223" stroke="#000" />
    {["2.81", "13.31", "13.81", "14.31", "14.81", "15.31", "15.81", "16.31", "16.81"].map((l, i) => (
      <g key={l}>
        <path d={`M${514.5 + i * 326 + (i ? 0 : 6)} 1223 V1233`} stroke="#000" />
        <text x={i ? 516 + i * 326 : 526} y="1232.5" fontSize="20.5">{l}</text>
      </g>
    ))}
    {series.map((s, i) => {
      const [r, g, b] = s.c;
      return <path key={i} d={trace(s, i + 3)} fill={`rgb(${r} ${g} ${b})`} fillOpacity="0.5" stroke={`rgb(${r >> 1} ${g >> 1} ${b >> 1})`} strokeOpacity="0.6" strokeWidth="1.2" />;
    })}
    <path d={`M520 ${BASE + 0.5} H3135`} stroke="#4b1040" strokeWidth="2" />
    {dots.map(([x, y, c]) => <circle key={c} cx={toX(x)} cy={toY(y)} r="15" fill={c} stroke="#000" strokeOpacity="0.5" strokeWidth="1.8" />)}
    {ring.map(([x, c]) => <circle key={c + x} cx={x} cy="1221" r="11" fill="none" stroke={c} strokeWidth="1.1" />)}
    <circle cx="1044" cy="1219" r="14" fill="none" stroke="#0055ff" strokeWidth="1.2" /><circle cx="1056" cy="1219" r="15" fill="none" stroke="#00aeff" strokeWidth="1.2" /><circle cx="1052" cy="1219" r="12" fill="none" stroke="#0000ff" />
  </svg>
);

const bookmarkCols: [string, string, string][] = [
  ["ID", "UTP", "w-[118px]"], ["Observed m/z", "482.9617", "w-[266px]"], ["Expected m/z", "482.9613", "w-[261px]"], ["rt", "15.19", "w-[118px]"], ["rt delta", "0.38", "w-[176px]"],
  ["#peaks", "16", "w-[174px]"], ["#good", "16", "w-[163px]"], ["Max Width", "91", "w-[221px]"], ["Max AreaTop", "2.8e+05", "w-[255px]"], ["Max S/N", "109", "w-[188px]"], ["Max Quality", "0.83", "w-[1076px]"],
];

export default function App() {
  return (
    <div className="relative flex h-[1752px] w-[3198px] flex-col overflow-hidden bg-[#f2f1f0] font-['Noto_Sans',sans-serif] text-[28px] text-[#4c4c4c]">
      <Defs />
      <div className="flex h-[42px] shrink-0 items-start border-t-2 border-[#47453f] bg-[#3c3b37] pl-[12px] text-[#dfdbd2]">
        {[["F", "ile", "w-[65px]"], ["W", "idgets", "w-[127px]"], ["H", "elp", "w-[80px]"]].map(([a, b, w]) => (
          <T key={a} className={`mt-[3px] ${w}`}><U>{a}</U>{b}</T>
        ))}
      </div>

      <div className="flex h-[88px] shrink-0">
        <Tool w="w-[96px]" gap="" icon={<FolderOpen />} label="Open" />
        <Tool w="w-[86px]" gap="" icon={<AlignIc />} label="Align" />
        <Tool w="w-[100px]" gap="mt-[1px]" icon={<PeaksIc />} label="Peaks" />
        <Tool w="w-[98px]" gap="mt-[1px]" icon={<MatchIc />} label="Match" />
        <Tool w="w-[128px]" gap="mt-[11px]" icon={<ToolsIc />} label="Options" />
        <Tool w="w-[84px]" gap="mt-[1px]" icon={<PollyIc />} label="Polly" />
        <div className="ml-auto mr-[19px] mt-[20px] flex h-[56px] items-center">
          <div className="flex h-[56px] w-[222px] items-center justify-center border-2 border-b-[#c9c7c3] border-l-white border-r-[#c9c7c3] border-t-white"><T className="tracking-[0.35px]">Auto Detect(-1)</T></div>
          <T className="w-[95px] tracking-[-0.5px]">Charge</T>
          <div className={`${field} h-[40px] w-[65px] pl-[4px]`}><T>1</T><div className="ml-auto flex h-full w-[16px] items-center justify-center border-l border-[#ccc] bg-[#f2f1f0]"><Spin className="h-[22px] w-[4px]" /></div></div>
          <div className={`${combo} ml-[2px] h-[40px] w-[317px] pl-[4px] pr-[7px]`}><T>AreaTop</T><Spin className="ml-auto h-[13px] w-[6px]" /></div>
          <T className="ml-[2px] w-[68px]">[m/z]</T>
          <div className={`${field} h-[40px] w-[263px] pl-[3px] text-[#3c3c3c]`}><T>482.96166992</T></div>
          <T className="w-[39px] pl-[1px]">+/-</T>
          <div className={`${field} h-[40px] w-[236px] pl-[4px] text-[#3c3c3c]`}><T className="tracking-[0.3px]">5.000000</T><div className="ml-auto flex h-full w-[16px] items-center justify-center border-l border-[#ccc] bg-[#f2f1f0]"><Spin className="h-[22px] w-[4px]" /></div></div>
          <div className={`${combo} ml-[2px] h-[40px] w-[84px] pl-[4px] pr-[6px]`}><T className="tracking-[-0.5px]">ppm</T><Spin className="ml-auto h-[13px] w-[6px]" /></div>
        </div>
      </div>

      <div className="flex h-[1578px] shrink-0">
        <div className="flex w-[3136px] shrink-0 flex-col">
          {/* second tool row */}
          <div className="flex h-[72px] shrink-0 items-center pl-[4px] pt-[8px]">
            <div className={`${combo} h-[58px] w-[380px] pl-[4px] pr-[6px]`}>
              <svg viewBox="0 0 16 14" className="h-[14px] w-[16px]"><rect y="2" width="10" height="10" fill="#4646c8" /><rect y="2" width="10" height="4" fill="#999" /><circle cx="10" cy="5" r="3.5" fill="#ddd" stroke="#333" /><path d="M12 8 L15 11" stroke="#222" strokeWidth="2" /></svg>
              <T className="ml-[4px]">KNOWNS</T><Spin className="ml-auto h-[13px] w-[6px]" />
            </div>
            <div className="ml-[7px] mt-[6px]"><FolderOpen /></div>
            <div className="ml-[13px]"><FloppyIc /></div>
            <div className="flex items-center">
              <div className="ml-[27px]"><ZoomFitIc /></div>
              <div className="ml-[13px]"><StarIc /></div>
              <div className="ml-[13px]"><TxtIc /></div>
              <Sep className="ml-[9px]" />
              <div className="ml-[9px]"><IntegralIc /></div>
              <div className="ml-[13px]"><SigmaIc /></div>
              <div className="ml-[12px]"><ArrowIc /></div>
              <div className="ml-[12px]"><ArrowIc flip /></div>
              <Sep className="ml-[10px]" />
              <div className="ml-[9px]"><FolderGo /></div>
              <Drop className="ml-[2px]" />
              <Sep className="ml-[9px]" />
              <div className={`${pressed} ml-[6px]`}><EicIc /></div>
              <div className="ml-[7px]"><TicIc /></div>
              <Sep className="ml-[10px]" />
              <div className={`${pressed} ml-[6px]`}><BarsIc /></div>
              <div className="ml-[7px]"><StackIc /></div>
              <div className="ml-[14px]"><MirrorIc /></div>
              <Sep className="ml-[8px]" />
            </div>
          </div>

          <div className="flex h-[1048px] shrink-0">
            {/* compounds dock */}
            <div className="flex w-[519px] shrink-0 flex-col pl-[18px] pt-[19px]">
              <div className={`${field} ml-px h-[40px] w-[469px] pl-[4px] text-[#9c9c9c]`}><T className="-mt-[2px] tracking-[-0.15px]">Compound Name Filter</T></div>
              <div className="mt-px flex">
                <div className="h-[945px] w-[459px] overflow-hidden border border-[#b4b1ab] bg-white">
                  <div className="flex h-[48px] items-center border-b-2 border-[#b4b1ab] bg-gradient-to-b from-white to-[#eeedeb]">
                    <div className="flex h-full w-[200px] shrink-0 items-center border-r-2 border-[#d8d6d3] pl-[9px]"><T className="mt-px tracking-[-0.5px]">name</T><svg viewBox="0 0 8 7" className="mb-[10px] ml-auto mr-[22px] h-[7px] w-[8px]"><path d="M0.5 6.5 L4 0.5 L7.5 6.5Z" fill="#999" stroke="#666" strokeWidth="0.7" /></svg></div>
                    <div className="flex h-full w-[200px] shrink-0 items-center border-r-2 border-[#d8d6d3] pl-[9px]"><T className="mt-px">m/z</T></div>
                    <T className="mt-px pl-[9px]">rt</T>
                  </div>
                  {compounds.map(([a, b, c], i) => (
                    <div key={i} className={`flex h-[34px] pl-[3px] ${a === "UTP" ? "bg-gradient-to-b from-[#eceae9] to-[#d6d4d1] text-[#2f2f2f]" : "text-[#3c3c3c]"}`}>
                      <T className="w-[200px] tracking-[0.3px]">{a}</T><T className="w-[201px] tracking-[0.2px]">{b}</T><T>{c}</T>
                    </div>
                  ))}
                </div>
                <div className="flex h-[945px] w-[12px] flex-col items-center rounded-full border border-[#bdbbb7] bg-[#dcdbd9] pt-[12px]">
                  <div className="flex h-[94px] w-[12px] items-center justify-center rounded-full border-2 border-[#aaa8a3] bg-[#fafafa]"><div className="h-[7px] w-[4px] border-y border-[#999]" /></div>
                </div>
              </div>
              <div className="flex h-[13px] w-[458px] items-center rounded-full border border-[#bdbbb7] bg-[#dcdbd9] pl-[12px]">
                <div className="flex h-[13px] w-[246px] items-center justify-center gap-[2px] rounded-full border border-b-2 border-[#aaa8a3] bg-[#fafafa]"><div className="h-[5px] w-[7px] border-x border-[#999]" /></div>
                <div className="ml-auto flex h-[11px] w-[14px] items-center justify-center rounded-r-full bg-[#f2f1f0]"><svg viewBox="0 0 4 6" className="h-[6px] w-[4px]"><path d="M0 0 L4 3 L0 6Z" fill="#555" /></svg></div>
              </div>
            </div>
            {/* chromatogram */}
            <div className="h-[1035px] w-[2617px] shrink-0 overflow-hidden border border-[#bdbbb7] bg-white"><Chart /></div>
          </div>

          {/* bookmarks */}
          <div className="flex h-[64px] shrink-0 items-center bg-[#d6d6d6] pl-[11px]">
            <T className="w-[310px] text-[35px] font-bold tracking-[0.2px] text-black">Bookmark Table</T>
            <MoveIc />
            <div className="ml-[13px]"><CheckIc /></div>
            <div className="ml-[11px]"><CrossIc /></div>
            <div className="ml-[12px]"><BulbIc /></div>
            <div className="ml-[12px]"><RemoveIc /></div>
            <div className="ml-[11px]"><CopyIc /></div>
            <Drop className="ml-[1px]" /><Sep className="ml-[11px]" />
            <div className="ml-[10px]"><ScatterIc /></div>
            <div className="ml-[11px]"><CellsIc /></div>
            <Sep className="ml-[12px]" />
            <div className="ml-[11px]"><PdfIc /></div>
            <div className="ml-[9px]"><CsvIc /></div>
            <Drop className="ml-[1px]" />
            <div className="ml-[11px]"><JsonIc /></div>
            <Sep className="ml-[12px]" />
            <div className="ml-[10px]"><XmlIc /></div>
            <T className="ml-auto mr-[28px] text-black">-</T>
          </div>
          <div className="h-[394px] shrink-0 border-2 border-l-[1px] border-r-[1px] border-[#bdbbb7] bg-white">
            <div className="flex h-[47px] border-b-2 border-[#b4b1ab] bg-gradient-to-b from-white to-[#eeedeb]">
              <div className="flex w-[118px] shrink-0 items-center border-r-2 border-[#d8d6d3] pl-[8px]"><T>#</T><svg viewBox="0 0 8 7" className="mb-[10px] ml-auto mr-[22px] h-[7px] w-[8px]"><path d="M0.5 6.5 L4 0.5 L7.5 6.5Z" fill="#999" stroke="#666" strokeWidth="0.7" /></svg></div>
              {bookmarkCols.map(([h, , w], i) => <div key={h} className={`flex shrink-0 items-center pl-[8px] ${i < 10 ? "border-r-2 border-[#d8d6d3]" : ""} ${w}`}><T className="tracking-[-0.1px]">{h}</T></div>)}
            </div>
            <div className="flex text-[#3c3c3c]">
              <div className="flex w-[118px] shrink-0 items-center pl-[19px]"><svg viewBox="0 0 7 8" className="h-[8px] w-[7px]"><path d="M0.5 0.5 L6.5 4 L0.5 7.5Z" fill="#888" stroke="#555" strokeWidth="0.7" /></svg><T className="-mt-px ml-[18px]">1</T></div>
              {bookmarkCols.map(([h, v, w]) => <div key={h} className={`shrink-0 pl-[4px] ${w}`}><T className="-mt-px tracking-[0.2px]">{v}</T></div>)}
            </div>
          </div>
        </div>

        {/* sidebar */}
        <div className="flex w-[62px] flex-col items-center pl-[1px] pt-[16px]">
          <FoldersIc />
          <div className={`${pressed} mt-[7px]`}><MoleculeIc /></div>
          <div className="mt-[7px] flex flex-col gap-[12px]">
            <MzIc /><SlidersIc /><XyIc /><CurvesIc /><C13Ic /><MolSearchIc /><PeakSearchIc /><ChatIc /><QIc /><FourIc />
          </div>
          <div className="mt-[10px] h-[2px] w-[48px] border-b border-white bg-[#d9d8d6]" />
          <div className={`${pressed} mt-[6px]`}><BookmarkPeakIc /></div>
          <div className="mt-[7px]"><PeaksIc /></div>
        </div>
      </div>

      {/* status bar */}
      <div className="mt-[2px] flex h-[42px] shrink-0 border-y-2 border-[#cbc9c5]">
        <div className="flex w-[3173px] border-r border-t-2 border-white pl-[2px]"><T className="mt-px tracking-[0.08px]">Group Validation Status: Good=0 Bad=0 Total=1</T></div>
        <div className="mt-[7px] flex h-[25px] w-[24px] items-end justify-end rounded-[4px] border-2 border-[#bdbbb7] bg-white"><svg viewBox="0 0 16 16" className="h-[16px] w-[16px]"><path d="M2 5 V2 H5 M2 2 L13 13 M13 9 V13 H9" fill="none" stroke="#777" strokeWidth="1.5" /></svg></div>
      </div>

      {/* autosave dialog */}
      <div className="absolute left-[1340px] top-[750px] flex h-[232px] w-[500px] flex-col overflow-visible rounded-t-[12px] bg-[#f2f1f0] shadow-[0_8px_36px_rgba(0,0,0,0.6),0_10px_18px_rgba(0,0,0,0.35)]">
        <div className="flex h-[56px] items-center rounded-t-[12px] border-t-2 border-[#6a675a] bg-gradient-to-b from-[#5b584e] to-[#3e3d39] pl-[14px]">
          <svg viewBox="0 0 34 34" className="h-[34px] w-[34px]"><circle cx="17" cy="17" r="15.5" fill="url(#close)" stroke="#35332e" strokeWidth="2" /><path d="M11.5 11.5 L22.5 22.5 M22.5 11.5 L11.5 22.5" stroke="#3a2a22" strokeWidth="2.2" /></svg>
          <T className="ml-[22px] text-[27px] font-bold tracking-[1px] text-[#dfdbd2]">Autosave</T>
        </div>
        <div className="flex pl-[25px] pt-[21px]">
          <svg viewBox="0 0 44 44" className="mt-[5px] h-[44px] w-[44px]"><ellipse cx="21" cy="37" rx="21" ry="6" fill="#ccc" opacity="0.7" /><circle cx="21" cy="21" r="19.5" fill="url(#q)" stroke="#2a6496" /><text x="21" y="33" textAnchor="middle" fontSize="33" fill="#fff" fontFamily="Noto Sans, sans-serif">?</text></svg>
          <div className="ml-[31px]"><T className="leading-[33px]">Do you want to enable</T><T className="leading-[33px]">autosave?</T></div>
        </div>
        <div className="mb-[23px] ml-auto mr-[23px] mt-auto flex gap-[14px]">
          <div className="flex h-[40px] w-[83px] items-center justify-center rounded-[4px] border border-b-2 border-[#b4b1ab] bg-gradient-to-b from-white to-[#e9e8e6]"><T><U>N</U>o</T></div>
          <div className="flex h-[40px] w-[83px] items-center justify-center rounded-[4px] border border-b-2 border-[#a9735c] bg-gradient-to-b from-[#ffb090] to-[#f38a62]"><T className="tracking-[0.5px]"><U>Y</U>es</T></div>
        </div>
      </div>
    </div>
  );
}
